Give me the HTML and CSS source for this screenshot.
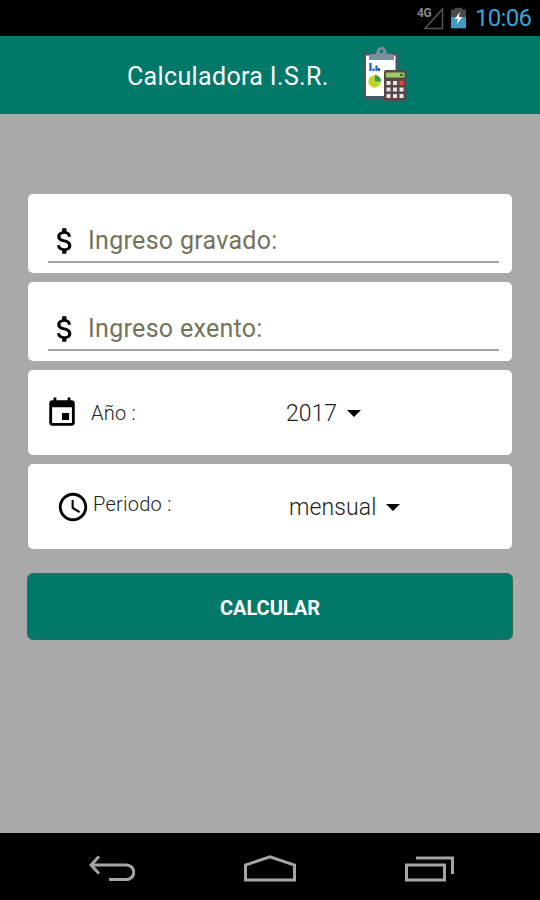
FILE: index.html
```html
<!DOCTYPE html>
<html lang="es">
<head>
    <meta charset="UTF-8">
    <meta name="viewport" content="width=device-width, initial-scale=1.0">
    <title>Calculadora I.S.R.</title>
    <link rel="stylesheet" href="styles.css">
</head>
<body>
    <div class="status-bar">
        <svg class="signal" width="28" height="24" viewBox="0 0 28 24">
            <path d="M8 22.500 25.500 3v19.500z" fill="none" stroke="#555" stroke-width="1.500"/>
            <text x="0" y="11" class="network">4G</text>
        </svg>
        <svg class="battery" width="15" height="22" viewBox="0 0 16 22">
            <path d="M4 0h8v2h4v9H0V2h4z" fill="#4a4a4a"/>
            <path d="M0 10h16v12H0z" fill="#3b9cc4"/>
            <path d="M9.500 4.500 4 12h3.500L6 18l6-8H8.500z" fill="#fff"/>
        </svg>
        <span class="clock">10:06</span>
    </div>

    <header class="header">
        <h1>Calculadora I.S.R.</h1>
        <svg class="logo" width="44" height="56" viewBox="0 0 44 56">
            <rect x="1.500" y="7" width="32.500" height="43.500" rx="2" fill="#fff" stroke="#455a64" stroke-width="3"/>
            <path d="M6 13v-3q0-3 3-3h3q1.500 0 1.500-2 1-5 5-5t5 5q0 2 1.500 2h3q3 0 3 3v3z" fill="#78909c"/>
            <circle cx="18.500" cy="4.500" r="1.700" fill="#00796b"/>
            <path d="M7.500 16v8M10.500 21.500V24M13.500 18.500V24M16 21v3" stroke="#1765c0" stroke-width="2.200"/>
            <circle cx="11.500" cy="34.500" r="6.200" fill="#c0d42b"/>
            <path d="M12 34.500V28a6.300 6.300 0 0 1 6.200 6.500z" fill="#2e9e49"/>
            <rect x="21" y="23" width="22.500" height="31" rx="2" fill="#57484a"/>
            <rect x="23" y="25.500" width="18.500" height="5" fill="#9ccc65"/>
            <path d="M37 28h3" stroke="#33691e" stroke-width="2"/>
            <path d="M23.500 34h4v4h-4zM30 34h4v4h-4zM23.500 40.500h4v4h-4zM30 40.500h4v4h-4zM36.500 40.500h4v4h-4zM23.500 47h4v4h-4zM30 47h4v4h-4zM36.500 47h4v4h-4z" fill="#e6e6e6"/>
            <path d="M36.500 34h4v4h-4z" fill="#f44336"/>
        </svg>
    </header>

    <main class="content">
        <div class="card card-input">
            <label class="field">
                <svg class="icon" viewBox="0 0 24 24"><path d="M11.800 10.900c-2.270-.59-3-1.200-3-2.150 0-1.090 1.010-1.850 2.700-1.850 1.780 0 2.440.85 2.500 2.100h2.210c-.07-1.720-1.120-3.300-3.210-3.810V3h-3v2.160c-1.940.42-3.500 1.680-3.500 3.610 0 2.310 1.910 3.460 4.700 4.130 2.500.6 3 1.480 3 2.410 0 .69-.49 1.790-2.700 1.790-2.060 0-2.870-.92-2.980-2.100h-2.200c.12 2.190 1.760 3.420 3.680 3.830V21h3v-2.150c1.950-.37 3.500-1.500 3.500-3.550 0-2.840-2.430-3.810-4.700-4.400z"/></svg>
                <span class="hint">Ingreso gravado:</span>
            </label>
        </div>

        <div class="card card-input">
            <label class="field">
                <svg class="icon" viewBox="0 0 24 24"><path d="M11.800 10.900c-2.270-.59-3-1.200-3-2.150 0-1.090 1.010-1.850 2.700-1.850 1.780 0 2.440.85 2.500 2.100h2.210c-.07-1.720-1.120-3.300-3.210-3.810V3h-3v2.160c-1.940.42-3.500 1.680-3.500 3.610 0 2.310 1.910 3.460 4.700 4.130 2.500.6 3 1.480 3 2.410 0 .69-.49 1.790-2.700 1.790-2.060 0-2.870-.92-2.980-2.100h-2.200c.12 2.190 1.760 3.420 3.680 3.830V21h3v-2.150c1.950-.37 3.500-1.500 3.500-3.550 0-2.840-2.430-3.810-4.700-4.400z"/></svg>
                <span class="hint">Ingreso exento:</span>
            </label>
        </div>

        <div class="card card-select year">
            <svg class="icon" viewBox="0 0 24 24"><path d="M17 12h-5v5h5v-5zM16 1v2H8V1H6v2H5c-1.110 0-1.990.9-1.990 2L3 19c0 1.100.89 2 2 2h14c1.100 0 2-.9 2-2V5c0-1.100-.9-2-2-2h-1V1h-2zm3 18H5V8h14v11z"/></svg>
            <span class="label">Año :</span>
            <span class="value">2017</span>
            <span class="arrow"></span>
        </div>

        <div class="card card-select period">
            <svg class="icon" viewBox="0 0 24 24"><path d="M11.990 2C6.470 2 2 6.480 2 12s4.470 10 9.990 10C17.520 22 22 17.520 22 12S17.520 2 11.990 2zM12 20c-4.420 0-8-3.580-8-8s3.580-8 8-8 8 3.580 8 8-3.580 8-8 8zm.5-13H11v6l5.250 3.150.75-1.230-4.500-2.670z"/></svg>
            <span class="label">Periodo :</span>
            <span class="value">mensual</span>
            <span class="arrow"></span>
        </div>

        <button class="calculate">CALCULAR</button>
    </main>

    <nav class="nav-bar">
        <svg width="48" height="28" viewBox="0 0 48 28">
            <path d="M12 1.500 4 10l8 8.500M4 10h35.500a7 7 0 0 1 0 14.500H22"/>
        </svg>
        <svg width="52" height="28" viewBox="0 0 52 28">
            <path d="M1.500 25V10L26 1.800 50.500 10v15z"/>
        </svg>
        <svg width="50" height="28" viewBox="0 0 50 28">
            <path d="M1.500 10h38v15h-38zM11 3h36.500v16"/>
        </svg>
    </nav>
</body>
</html>
```
FILE: styles.css
```css
* {
    box-sizing: border-box;
}
body {
    margin: 0;
    height: 900px;
    display: flex;
    flex-direction: column;
    overflow: hidden;
    font-family: Roboto, sans-serif;
    background-color: #a9a9a9;
    color: #222;
}
.status-bar {
    height: 36px;
    padding-right: 9px;
    display: flex;
    align-items: center;
    justify-content: flex-end;
    background: #000;
}
.signal {
    margin-right: 6px;
}
.network {
    font-size: 12px;
    font-weight: bold;
    fill: #888;
    letter-spacing: -0.5px;
}
.battery {
    margin-right: 9px;
}
.clock {
    width: 56px;
    font-size: 24px;
    line-height: 36px;
    letter-spacing: -0.7px;
    white-space: nowrap;
    color: #33a5d6;
}
.header {
    height: 78px;
    padding-left: 127px;
    display: flex;
    align-items: center;
    background: #00796b;
    color: #fff;
}
.header h1 {
    width: 236px;
    margin: 3px 0 0;
    font-size: 25px;
    font-weight: normal;
    letter-spacing: 0.35px;
    white-space: nowrap;
}
.logo {
    margin-top: -1px;
}
.content {
    flex: 1;
    padding: 80px 28px 0;
    display: flex;
    flex-direction: column;
    gap: 9px;
}
.card {
    background: #fff;
    border-radius: 5px;
}
.card-input {
    height: 79px;
    padding: 26px 13px 0 20px;
}
.field {
    height: 43px;
    display: flex;
    align-items: center;
    border-bottom: 2px solid #a5a5a5;
}
.icon {
    width: 34px;
    height: 34px;
    flex: none;
    fill: #000;
}
.hint {
    margin-left: 6px;
    font-size: 25px;
    letter-spacing: 0.3px;
    color: #737359;
    white-space: nowrap;
}
.card-select {
    height: 85px;
    display: flex;
    align-items: center;
}
.year {
    padding-left: 17px;
}
.period {
    padding-left: 28px;
}
.label {
    font-size: 20px;
    font-weight: 300;
    letter-spacing: 0.25px;
}
.year .label {
    width: 195px;
    margin-left: 12px;
}
.period .label {
    width: 196px;
    margin: -5px 0 0 3px;
}
.value {
    margin-top: 2px;
    font-size: 23px;
    font-weight: 300;
}
.arrow {
    margin: 2px 0 0 10px;
    border: 7px solid transparent;
    border-top-color: #000;
    border-bottom: 0;
}
.period .value {
    letter-spacing: 0.1px;
}
.calculate {
    height: 67px;
    margin: 15px -1px 0;
    padding-top: 3px;
    border: 1px solid #39675f;
    border-radius: 6px;
    background: #00796b;
    color: #fff;
    font-family: inherit;
    font-size: 20px;
    font-weight: bold;
}
.nav-bar {
    height: 67px;
    padding: 4px 85px 0 87px;
    display: flex;
    align-items: center;
    justify-content: space-between;
    background: #000;
}
.nav-bar path {
    fill: none;
    stroke: #a5a5a5;
    stroke-width: 3;
}
```
